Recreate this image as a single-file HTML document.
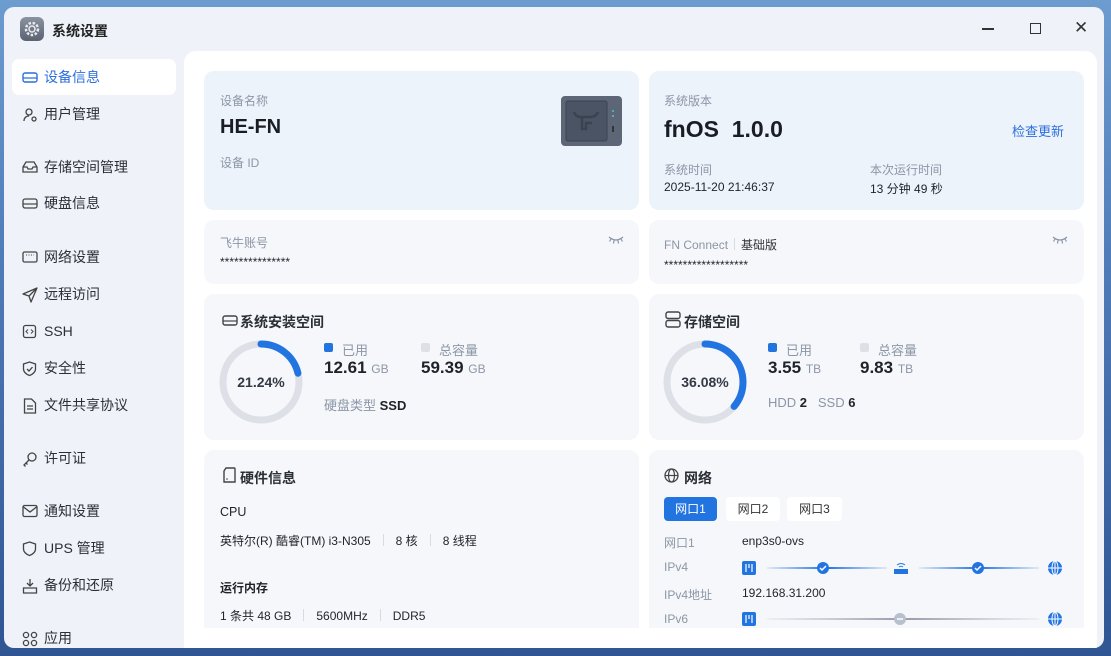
<!DOCTYPE html>
<html><head><meta charset="utf-8"><style>
*{margin:0;padding:0;box-sizing:border-box}
body{width:1111px;height:656px;overflow:hidden;font-family:"Liberation Sans","Noto Sans CJK SC",sans-serif;background:linear-gradient(180deg,#6d9ccf 0%,#4f7bb8 40%,#2f5593 100%);position:relative;color:#1f2329}
.win{position:absolute;left:4px;top:7px;width:1100px;height:641px;background:#eff3f9;border-radius:10px;overflow:hidden}
.title{position:absolute;left:48px;top:14px;font-size:14px;font-weight:bold;color:#222}
.appicon{position:absolute;left:16px;top:10px;width:24px;height:24px;border-radius:6px;background:linear-gradient(#8a93a0,#5b6371)}
.ctrl{position:absolute;top:14px;font-size:14px;color:#333}
.nav{position:absolute;left:8px;width:164px;height:36px;border-radius:7px;font-size:14px;color:#2b2f36;display:flex;align-items:center;padding-left:32px}
.nav.act{background:#fff;color:#2c6fdc}
.nav svg{position:absolute;left:10px;top:11px}
.main{position:absolute;left:180px;top:44px;width:913px;height:600px;background:#fff;border-radius:12px 12px 0 0;overflow:hidden}
.card{position:absolute;border-radius:10px;background:#f5f7fb}
.lbl{font-size:12px;color:#8c96a6;position:absolute}
.txt{position:absolute;font-size:12px;color:#1f2329}
.h{position:absolute;font-size:14px;font-weight:bold;color:#2b2f36}
.sep{display:inline-block;width:1px;height:12px;background:#d7dbe2;margin:0 12px;vertical-align:-1px}
.eye{position:absolute;top:15px}
</style></head><body>
<div class="win">
<div class="appicon"><svg width="24" height="24"><circle cx="12" cy="12" r="6" fill="none" stroke="#e8eaee" stroke-width="2.5" stroke-dasharray="2.5 1.6"/><circle cx="12" cy="12" r="3" fill="none" stroke="#e8eaee" stroke-width="1.5"/></svg></div>
<div class="title">系统设置</div>
<div class="ctrl" style="left:978px;top:21px;width:12px;height:1.5px;background:#333"></div>
<div class="ctrl" style="left:1026px;top:16px;width:11px;height:11px;border:1.5px solid #333"></div>
<div class="ctrl" style="left:1070px;top:11px;font-size:17px">✕</div>

<div class="nav act" style="top:52px"><svg width="16" height="14"><rect x="1" y="3" width="14" height="9" rx="2" fill="none" stroke="#2c6fdc" stroke-width="1.4"/><line x1="1" y1="8" x2="15" y2="8" stroke="#2c6fdc" stroke-width="1.2"/></svg>设备信息</div>
<div class="nav" style="top:89px"><svg width="16" height="16"><circle cx="7" cy="5" r="3" fill="none" stroke="#444" stroke-width="1.3"/><path d="M2 14c0-3 2-5 5-5" fill="none" stroke="#444" stroke-width="1.3"/><circle cx="12" cy="12" r="2" fill="none" stroke="#444" stroke-width="1.3"/></svg>用户管理</div>
<div class="nav" style="top:142px"><svg width="16" height="14"><path d="M1 7l3-5h8l3 5v5H1z M1 7h4l1 2h4l1-2h4" fill="none" stroke="#444" stroke-width="1.3"/></svg>存储空间管理</div>
<div class="nav" style="top:178px"><svg width="16" height="14"><rect x="1" y="3" width="14" height="9" rx="2" fill="none" stroke="#444" stroke-width="1.3"/><line x1="1" y1="8" x2="15" y2="8" stroke="#444" stroke-width="1.2"/></svg>硬盘信息</div>
<div class="nav" style="top:232px"><svg width="16" height="14"><rect x="1" y="2" width="14" height="10" rx="1.5" fill="none" stroke="#444" stroke-width="1.3"/><path d="M4 5h8" stroke="#444" stroke-dasharray="1 1.5"/></svg>网络设置</div>
<div class="nav" style="top:269px"><svg width="16" height="16"><path d="M15 1L1 7l6 2 2 6z M7 9l8-8" fill="none" stroke="#444" stroke-width="1.3" stroke-linejoin="round"/></svg>远程访问</div>
<div class="nav" style="top:306px"><svg width="16" height="16"><rect x="1.5" y="1.5" width="12" height="12" rx="2" fill="none" stroke="#444" stroke-width="1.3"/><path d="M6 5.5l-2 2 2 2M9 5.5l2 2-2 2" fill="none" stroke="#444"/></svg>SSH</div>
<div class="nav" style="top:343px"><svg width="16" height="16"><path d="M7.5 1l6 2v5c0 3-3 5.5-6 6.5-3-1-6-3.5-6-6.5V3z M5 8l2 2 3.5-4" fill="none" stroke="#444" stroke-width="1.3"/></svg>安全性</div>
<div class="nav" style="top:380px"><svg width="16" height="16"><path d="M2.5 1h7l4 4v10h-11z M5 8h6M5 11h6" fill="none" stroke="#444" stroke-width="1.3"/></svg>文件共享协议</div>
<div class="nav" style="top:433px"><svg width="16" height="16"><circle cx="10" cy="6" r="4" fill="none" stroke="#444" stroke-width="1.3"/><path d="M7 9l-5 5 1.5 1.5M4 12l1.5 1.5" fill="none" stroke="#444" stroke-width="1.3"/></svg>许可证</div>
<div class="nav" style="top:486px"><svg width="16" height="14"><rect x="1" y="1.5" width="14" height="11" rx="1.5" fill="none" stroke="#444" stroke-width="1.3"/><path d="M1.5 3l6.5 5 6.5-5" fill="none" stroke="#444" stroke-width="1.3"/></svg>通知设置</div>
<div class="nav" style="top:523px"><svg width="16" height="16"><path d="M7.5 1l6 2v5c0 3-3 5.5-6 6.5-3-1-6-3.5-6-6.5V3z" fill="none" stroke="#444" stroke-width="1.3"/></svg>UPS 管理</div>
<div class="nav" style="top:560px"><svg width="16" height="16"><path d="M8 1v7M5 5l3 3 3-3M1.5 10h13v5h-13z" fill="none" stroke="#444" stroke-width="1.3"/></svg>备份和还原</div>
<div class="nav" style="top:613px"><svg width="16" height="16"><circle cx="4" cy="4" r="2.6" fill="none" stroke="#444" stroke-width="1.3"/><circle cx="12" cy="4" r="2.6" fill="none" stroke="#444" stroke-width="1.3"/><circle cx="4" cy="12" r="2.6" fill="none" stroke="#444" stroke-width="1.3"/><circle cx="12" cy="12" r="2.6" fill="none" stroke="#444" stroke-width="1.3"/></svg>应用</div>

<div class="main">
 <div class="card" style="left:20px;top:20px;width:435px;height:139px;background:#edf3fb">
  <div class="lbl" style="left:16px;top:21px">设备名称</div>
  <div style="position:absolute;left:16px;top:45px;font-size:20px;font-weight:bold;color:#1a1d23">HE-FN</div>
  <div class="lbl" style="left:16px;top:83px">设备 ID</div>
  <svg style="position:absolute;left:356px;top:25px" width="64" height="52"><rect x="1" y="0" width="61" height="50" rx="4" fill="#5c6676"/><rect x="6" y="5" width="41" height="40" rx="2" fill="#4a5464" stroke="#3b4350"/><path d="M14 16q2 6 10 5h6q6 0 8-5M22 21v12h4v-6h6" fill="none" stroke="#3b4350" stroke-width="2.5"/><circle cx="53" cy="15" r="1" fill="#4cc"/><circle cx="53" cy="20" r="1" fill="#4cc"/><rect x="52" y="30" width="2" height="6" fill="#333"/></svg>
 </div>
 <div class="card" style="left:465px;top:20px;width:435px;height:139px;background:#edf3fb">
  <div class="lbl" style="left:15px;top:21px">系统版本</div>
  <div style="position:absolute;left:15px;top:45px;font-size:23px;font-weight:bold;color:#1a1d23">fnOS&nbsp; 1.0.0</div>
  <div style="position:absolute;left:363px;top:50px;font-size:13px;color:#2c6fdc">检查更新</div>
  <div class="lbl" style="left:15px;top:90px">系统时间</div>
  <div class="txt" style="left:15px;top:109px">2025-11-20 21:46:37</div>
  <div class="lbl" style="left:221px;top:90px">本次运行时间</div>
  <div class="txt" style="left:221px;top:109px">13 分钟 49 秒</div>
 </div>
 <div class="card" style="left:20px;top:169px;width:435px;height:64px">
  <div class="lbl" style="left:16px;top:14px">飞牛账号</div>
  <div class="txt" style="left:16px;top:35px">***************</div>
  <svg class="eye" style="left:404px" width="16" height="10"><path d="M1 2q7 6 14 0M3 4l-1.5 2.5M6 5.5l-.5 3M10 5.5l.5 3M13 4l1.5 2.5" fill="none" stroke="#8c96a6" stroke-width="1.2"/></svg>
 </div>
 <div class="card" style="left:465px;top:169px;width:435px;height:64px">
  <div class="lbl" style="left:15px;top:16px">FN Connect<span class="sep" style="margin:0 6px"></span><span style="color:#333">基础版</span></div>
  <div class="txt" style="left:15px;top:38px">******************</div>
  <svg class="eye" style="left:403px" width="16" height="10"><path d="M1 2q7 6 14 0M3 4l-1.5 2.5M6 5.5l-.5 3M10 5.5l.5 3M13 4l1.5 2.5" fill="none" stroke="#8c96a6" stroke-width="1.2"/></svg>
 </div>
 <div class="card" style="left:20px;top:243px;width:435px;height:146px">
  <svg style="position:absolute;left:18px;top:19px" width="16" height="14"><rect x="1" y="3" width="14" height="9" rx="2" fill="none" stroke="#444" stroke-width="1.4"/><line x1="1" y1="8" x2="15" y2="8" stroke="#444" stroke-width="1.2"/></svg>
  <div class="h" style="left:36px;top:18px">系统安装空间</div>
  <svg style="position:absolute;left:15px;top:46px" width="84" height="84"><circle cx="42" cy="42" r="38" fill="none" stroke="#dde0e6" stroke-width="7"/><circle cx="42" cy="42" r="38" fill="none" stroke="#2274e0" stroke-width="7" stroke-dasharray="50.7 300" transform="rotate(-90 42 42)" stroke-linecap="round"/><text x="42" y="47" text-anchor="middle" font-size="14" font-weight="bold" fill="#333a45" font-family="Liberation Sans">21.24%</text></svg>
  <div style="position:absolute;left:120px;top:49px;width:9px;height:9px;background:#2274e0;border-radius:2px"></div>
  <div class="lbl" style="left:138px;top:46px;font-size:13px">已用</div>
  <div style="position:absolute;left:120px;top:64px;font-size:17px;font-weight:bold">12.61 <span style="font-size:12px;color:#8c96a6;font-weight:normal">GB</span></div>
  <div style="position:absolute;left:217px;top:49px;width:9px;height:9px;background:#dde0e6;border-radius:2px"></div>
  <div class="lbl" style="left:235px;top:46px;font-size:13px">总容量</div>
  <div style="position:absolute;left:217px;top:64px;font-size:17px;font-weight:bold">59.39 <span style="font-size:12px;color:#8c96a6;font-weight:normal">GB</span></div>
  <div class="lbl" style="left:120px;top:101px;font-size:13px">硬盘类型 <b style="color:#1f2329">SSD</b></div>
 </div>
 <div class="card" style="left:465px;top:243px;width:435px;height:146px">
  <svg style="position:absolute;left:16px;top:17px" width="16" height="17"><rect x="1" y="1" width="14" height="6.5" rx="2" fill="none" stroke="#444" stroke-width="1.4"/><rect x="1" y="9.5" width="14" height="6.5" rx="2" fill="none" stroke="#444" stroke-width="1.4"/></svg>
  <div class="h" style="left:35px;top:18px">存储空间</div>
  <svg style="position:absolute;left:14px;top:46px" width="84" height="84"><circle cx="42" cy="42" r="38" fill="none" stroke="#dde0e6" stroke-width="7"/><circle cx="42" cy="42" r="38" fill="none" stroke="#2274e0" stroke-width="7" stroke-dasharray="86.1 300" transform="rotate(-90 42 42)" stroke-linecap="round"/><text x="42" y="47" text-anchor="middle" font-size="14" font-weight="bold" fill="#333a45" font-family="Liberation Sans">36.08%</text></svg>
  <div style="position:absolute;left:119px;top:49px;width:9px;height:9px;background:#2274e0;border-radius:2px"></div>
  <div class="lbl" style="left:137px;top:46px;font-size:13px">已用</div>
  <div style="position:absolute;left:119px;top:64px;font-size:17px;font-weight:bold">3.55 <span style="font-size:12px;color:#8c96a6;font-weight:normal">TB</span></div>
  <div style="position:absolute;left:211px;top:49px;width:9px;height:9px;background:#dde0e6;border-radius:2px"></div>
  <div class="lbl" style="left:229px;top:46px;font-size:13px">总容量</div>
  <div style="position:absolute;left:211px;top:64px;font-size:17px;font-weight:bold">9.83 <span style="font-size:12px;color:#8c96a6;font-weight:normal">TB</span></div>
  <div class="lbl" style="left:119px;top:101px;font-size:13px">HDD <b style="color:#1f2329">2</b>&nbsp;&nbsp; SSD <b style="color:#1f2329">6</b></div>
 </div>
 <div class="card" style="left:20px;top:399px;width:435px;height:230px">
  <svg style="position:absolute;left:18px;top:17px" width="14" height="16"><path d="M4 1h8a1 1 0 011 1v13H2V4z" fill="none" stroke="#444" stroke-width="1.4"/><circle cx="5" cy="12" r=".8" fill="#444"/></svg>
  <div class="h" style="left:36px;top:18px">硬件信息</div>
  <div class="txt" style="left:16px;top:55px;font-size:12.5px">CPU</div>
  <div class="txt" style="left:16px;top:82px">英特尔(R) 酷睿(TM) i3-N305<span class="sep"></span>8 核<span class="sep"></span>8 线程</div>
  <div class="txt" style="left:16px;top:129px;font-weight:bold">运行内存</div>
  <div class="txt" style="left:16px;top:157px">1 条共 48 GB<span class="sep"></span>5600MHz<span class="sep"></span>DDR5</div>
 </div>
 <div class="card" style="left:465px;top:399px;width:435px;height:230px">
  <svg style="position:absolute;left:15px;top:18px" width="15" height="15"><circle cx="7.5" cy="7.5" r="6.5" fill="none" stroke="#444" stroke-width="1.3"/><ellipse cx="7.5" cy="7.5" rx="3" ry="6.5" fill="none" stroke="#444" stroke-width="1.2"/><line x1="1" y1="7.5" x2="14" y2="7.5" stroke="#444" stroke-width="1.2"/></svg>
  <div class="h" style="left:35px;top:18px">网络</div>
  <div style="position:absolute;left:15px;top:47px;width:53px;height:24px;background:#2274e0;border-radius:4px;color:#fff;font-size:12px;text-align:center;line-height:24px">网口1</div>
  <div style="position:absolute;left:77px;top:47px;width:54px;height:24px;background:#fff;border-radius:4px;color:#333;font-size:12px;text-align:center;line-height:24px">网口2</div>
  <div style="position:absolute;left:138px;top:47px;width:55px;height:24px;background:#fff;border-radius:4px;color:#333;font-size:12px;text-align:center;line-height:24px">网口3</div>
  <div class="lbl" style="left:15px;top:84px">网口1</div><div class="txt" style="left:93px;top:84px">enp3s0-ovs</div>
  <div class="lbl" style="left:15px;top:110px">IPv4</div>
  <div class="lbl" style="left:15px;top:136px">IPv4地址</div><div class="txt" style="left:93px;top:136px">192.168.31.200</div>
  <div class="lbl" style="left:15px;top:162px">IPv6</div>
  <svg style="position:absolute;left:90px;top:105px" width="330" height="80">
   <defs><linearGradient id="g" x1="0" x2="1"><stop offset="0" stop-color="#2274e0" stop-opacity=".1"/><stop offset=".5" stop-color="#2274e0"/><stop offset="1" stop-color="#2274e0" stop-opacity=".1"/></linearGradient><linearGradient id="g2" x1="0" x2="1"><stop offset="0" stop-color="#aab" stop-opacity=".1"/><stop offset=".5" stop-color="#99a"/><stop offset="1" stop-color="#aab" stop-opacity=".1"/></linearGradient></defs>
   <rect x="3" y="6" width="14" height="14" rx="2" fill="#2274e0"/><path d="M7 9v8M10 9v4M13 9v8" stroke="#fff" stroke-width="1.2"/>
   <rect x="28" y="12" width="120" height="2" fill="url(#g)"/><circle cx="84" cy="13" r="6" fill="#2274e0"/><path d="M81 13l2 2 4-4" stroke="#fff" stroke-width="1.5" fill="none"/>
   <path d="M155 14h14v5h-14z" fill="#2274e0"/><path d="M158 10q4-3 8 0M160 12q2-1.5 4 0" stroke="#2274e0" fill="none"/>
   <rect x="180" y="12" width="120" height="2" fill="url(#g)"/><circle cx="239" cy="13" r="6" fill="#2274e0"/><path d="M236 13l2 2 4-4" stroke="#fff" stroke-width="1.5" fill="none"/>
   <circle cx="316" cy="13" r="7" fill="#2274e0"/><path d="M309 13h14M316 6v14" stroke="#fff"/><ellipse cx="316" cy="13" rx="3" ry="7" fill="none" stroke="#fff"/>
   <rect x="3" y="57" width="14" height="14" rx="2" fill="#2274e0"/><path d="M7 60v8M10 60v4M13 60v8" stroke="#fff" stroke-width="1.2"/>
   <rect x="28" y="63" width="272" height="2" fill="url(#g2)"/><circle cx="161" cy="64" r="6" fill="#b7c0cc"/><path d="M158 64h6" stroke="#fff" stroke-width="1.5"/>
   <circle cx="316" cy="64" r="7" fill="#2274e0"/><path d="M309 64h14M316 57v14" stroke="#fff"/><ellipse cx="316" cy="64" rx="3" ry="7" fill="none" stroke="#fff"/>
  </svg>
 </div>
 <div style="position:absolute;left:0;top:577px;width:913px;height:30px;background:#fff"></div>
</div>
</div>
</body></html>
